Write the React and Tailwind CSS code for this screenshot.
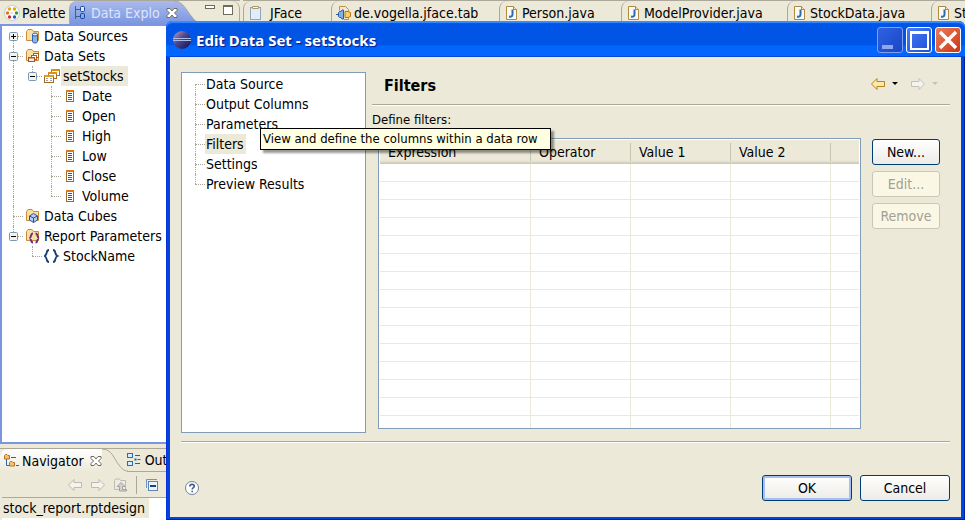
import React from "react";

const UI = "font-['DejaVu_Sans_Condensed','DejaVu_Sans',sans-serif]";

function Svg({ w = 16, h = 16, className = "", children }) {
  return (
    <svg width={w} height={h} viewBox={`0 0 ${w} ${h}`} className={`block shrink-0 ${className}`} aria-hidden="true">
      {children}
    </svg>
  );
}

/* ---------- icons ---------- */

function PaletteIcon() {
  const dots = [
    [5.5, 4, "#f0a020"], [10.5, 4, "#d8b000"], [12.5, 8, "#2f9e3a"],
    [10.5, 12, "#2a56c8"], [5.5, 12, "#d03030"], [3.5, 8, "#e07818"],
  ];
  return (
    <Svg>
      <circle cx="8" cy="8" r="7.5" fill="#fdfdfa" stroke="#b9c3d6" strokeWidth="0.8" />
      {dots.map(([x, y, c]) => (
        <circle key={`${x}-${y}`} cx={x} cy={y} r="1.7" fill={c} />
      ))}
      <circle cx="8" cy="8" r="1.2" fill="#d9e2f2" />
    </Svg>
  );
}

function ExplorerIcon() {
  return (
    <Svg>
      <path d="M1.500 1v13M1.500 4.500h5M1.500 11.500h5" fill="none" stroke="#3f5f8c" />
      <rect x="6.500" y="1.500" width="4" height="5" rx="1" fill="#d8eafc" stroke="#1d3f96" />
      <rect x="6.500" y="8.500" width="4" height="5" rx="1" fill="#6fb2ec" stroke="#1d3f96" />
    </Svg>
  );
}

function CloseMark({ fill = "#fff", stroke = "#6f6b5c" }) {
  return (
    <Svg w={12} h={12}>
      <path d="M1 1.5h3l2 2.5 2-2.5h3v2L8.500 6l2.500 2.500v2H8L6 8l-2 2.500H1v-2L3.500 6 1 3.500z" fill={fill} stroke={stroke} />
    </Svg>
  );
}

function FolderBase() {
  return (
    <path d="M1.500 3.500l1.500-2h4l1.500 2h5v9h-12z" fill="#f9e0a0" stroke="#c98a3a" />
  );
}

function DataSourcesIcon() {
  return (
    <Svg>
      <FolderBase />
      <path d="M7.500 6.500v7c0 2 5 2 5 0v-7z" fill="#86b4ea" stroke="#2c5fae" />
      <ellipse cx="10" cy="6.500" rx="2.500" ry="1.500" fill="#dcebfc" stroke="#2c5fae" />
    </Svg>
  );
}

function DataSetsIcon() {
  return (
    <Svg>
      <FolderBase />
      <rect x="8.500" y="5.500" width="5" height="4" fill="#fff" stroke="#b05a1a" />
      <rect x="6.500" y="7.500" width="5" height="4" fill="#fff" stroke="#b05a1a" />
      <rect x="3.500" y="9.500" width="6" height="4" fill="#eef" stroke="#a8501a" />
      <path d="M3.500 10h6" stroke="#d0521c" />
    </Svg>
  );
}

function DataSetIcon() {
  return (
    <Svg>
      <rect x="7.500" y="1.500" width="8" height="6" fill="#fff" stroke="#b07020" />
      <path d="M7 2h9" stroke="#d89018" strokeWidth="2" />
      <rect x="4.500" y="4.500" width="8" height="6" fill="#fff" stroke="#b07020" />
      <path d="M4 5h9" stroke="#d89018" strokeWidth="2" />
      <rect x="0.500" y="7.500" width="9" height="7" fill="#fff" stroke="#a8691c" />
      <path d="M0 8h10" stroke="#e09a20" strokeWidth="2" />
      <path d="M2 10.500h2M6 10.500h2M2 12.500h2M6 12.500h2" stroke="#8da4c4" />
    </Svg>
  );
}

function ColumnIcon() {
  return (
    <Svg>
      <rect x="3.500" y="2.500" width="7" height="11" fill="#fff" stroke="#9a6a2c" />
      <path d="M3 3h8" stroke="#e07818" strokeWidth="2" />
      <path d="M5 5.500h4M5 7.500h4M5 9.500h4M5 11.500h4" stroke="#d01c34" />
    </Svg>
  );
}

function CubesIcon() {
  return (
    <Svg>
      <FolderBase />
      <path d="M4.500 8l4-2.500 4 2.500v4l-4 2.500-4-2.500z" fill="#b4ccf2" stroke="#2f4f9c" />
      <path d="M4.500 8l4 2 4-2M8.500 10v4.500" fill="none" stroke="#2f4f9c" />
    </Svg>
  );
}

function ParamsIcon() {
  return (
    <Svg>
      <FolderBase />
      <path d="M8 5.500c-3 0-1 4-3.500 4.500C7 10.500 5 14.500 8 14.500M10.500 5.500c3 0 1 4 3.500 4.500C11.500 10.500 13.500 14.500 10.500 14.500" fill="none" stroke="#6a2d86" strokeWidth="1.800" />
    </Svg>
  );
}

function BracesIcon() {
  return (
    <Svg>
      <path d="M5 2C1.500 2 4 6.500 0.500 8 4 9.500 1.500 14 5 14M9 2c3.500 0 1 4.500 4.500 6C10 9.500 12.500 14 9 14" fill="none" stroke="#1c3c74" strokeWidth="1.800" />
    </Svg>
  );
}

function NavigatorIcon() {
  return (
    <Svg>
      <path d="M2.500 6v6.500H6M7 4.500h5" fill="none" stroke="#2c64a8" />
      <path d="M12 12.500h3" stroke="#2c64a8" />
      <path d="M0.500 2.500l1-1h1.500l1 1h1.500v3.500h-5z" fill="#f6c070" stroke="#b8741c" />
      <path d="M5.500 9.500l1-1H8l1 1h1.500V13h-5z" fill="#f6c070" stroke="#b8741c" />
    </Svg>
  );
}

function OutlineIcon() {
  return (
    <Svg>
      <rect x="0.500" y="1.500" width="5" height="4" fill="#d4ecfc" stroke="#1f72b8" />
      <rect x="0.500" y="9.500" width="5" height="4" fill="#d4ecfc" stroke="#1f72b8" />
      <path d="M8 3.500h5M10.500 7.500h3M8 11.500h5" stroke="#1f62ac" />
      <rect x="7.500" y="6.500" width="2" height="2" fill="#1f62ac" />
    </Svg>
  );
}

function ArrowIcon({ back, fill, stroke }) {
  return (
    <Svg>
      <path
        d={back ? "M1.500 8l5.500-5.500v3h7.500v5H7v3z" : "M14.500 8L9 2.500v3H1.500v5H9v3z"}
        fill={fill}
        stroke={stroke}
      />
    </Svg>
  );
}

function UpFolderIcon() {
  return (
    <Svg>
      <path d="M1.500 3.500l1-1.500h4l1 1.500h5v9h-11z" fill="#ecebe4" stroke="#bdbab0" />
      <path d="M8 5.500l4 4H9.500v3h4v1.500H6.500V9.500H4z" fill="#d3d2cc" stroke="#a3a29c" />
    </Svg>
  );
}

function CollapseIcon() {
  return (
    <Svg>
      <path d="M2.500 11V2.500H13" fill="none" stroke="#6e93c6" />
      <rect x="4.500" y="4.500" width="9" height="9" fill="#eaf3fd" stroke="#5c85bd" />
      <path d="M6 9h6" stroke="#1d3f7a" strokeWidth="2" />
    </Svg>
  );
}

function JavaFileIcon() {
  return (
    <Svg>
      <path d="M2.500 1.500h7l3 3v10h-10z" fill="#f7fafe" stroke="#b08a3c" />
      <path d="M9.500 1.500v3h3" fill="#f3dfa8" stroke="#b08a3c" />
      <path d="M8.500 4.500v5c0 2-1.500 2.500-3.500 2" fill="none" stroke="#2f6aa8" strokeWidth="2" />
    </Svg>
  );
}

function ClipboardIcon() {
  return (
    <Svg>
      <rect x="2.500" y="2.500" width="10" height="12" fill="#e3edf9" stroke="#8fa4c0" />
      <path d="M4.500 1.500h6v2h-6z" fill="#fdf7e0" stroke="#a89a70" />
    </Svg>
  );
}

function PluginIcon() {
  return (
    <Svg>
      <path d="M3.500 1.500h6l3 3v2M3.500 1.500v4M8 14.500h4.500v-3" fill="none" stroke="#c0923a" />
      <path d="M9 6.500h3l2.500 1v4l-2.500 1H9z" fill="#fbcf6a" stroke="#b4781c" />
      <path d="M0 9.500h2.500M2.500 7.500l1-1h1.500l1-1.500h1.500v9H6l-1-1.500H3.500l-1-1z" fill="#7fb0e6" stroke="#2c5c9c" />
    </Svg>
  );
}

function EclipseIcon() {
  return (
    <Svg w={20} h={20}>
      <defs>
        <linearGradient id="ball" x1="0" y1="0" x2="1" y2="1">
          <stop offset="0" stopColor="#c99fb4" />
          <stop offset="0.450" stopColor="#4a4690" />
          <stop offset="1" stopColor="#120e50" />
        </linearGradient>
      </defs>
      <circle cx="10" cy="10" r="9" fill="url(#ball)" />
      <path d="M1 8.500h18M1 10.500h18" stroke="#a9bce6" />
    </Svg>
  );
}

function HelpIcon() {
  return (
    <Svg>
      <circle cx="8" cy="8" r="6.500" fill="#fff" stroke="#6c84a4" />
      <path d="M5.800 6.500C5.800 3.600 10.300 3.800 10.300 6.300 10.300 7.700 8.200 7.700 8.200 9.500M8.200 10.700v1.600" fill="none" stroke="#3c5f8c" strokeWidth="1.600" />
    </Svg>
  );
}

function CaretIcon({ color }) {
  return (
    <Svg w={6} h={4}>
      <path d="M0 0h6L3 3z" fill={color} />
    </Svg>
  );
}

/* ---------- tree ---------- */

function Guide({ kind }) {
  const top = kind === "first" || kind === "plus";
  const up = kind !== "blank" && !top;
  const down = top || kind === "line" || kind === "tee" || kind === "minus";
  const across = kind !== "line" && kind !== "blank";
  const box = kind === "plus" || kind === "minus" || kind === "minusEnd";
  return (
    <span className="relative h-5 w-[19px] shrink-0">
      {up && <span className="absolute left-[9px] top-0 h-2.5 border-l border-dotted border-[#a8a496]" />}
      {down && <span className="absolute bottom-0 left-[9px] h-2.5 border-l border-dotted border-[#a8a496]" />}
      {across && <span className="absolute left-[9px] right-0 top-2.5 border-t border-dotted border-[#a8a496]" />}
      {box && (
        <svg width="9" height="9" viewBox="0 0 9 9" className="absolute left-[5px] top-1.5">
          <rect x="0.500" y="0.500" width="8" height="8" rx="1" fill="#f4f2ea" stroke="#7898b5" />
          <path d="M2 4.500h5" stroke="#000" />
          {kind === "plus" && <path d="M4.500 2v5" stroke="#000" />}
        </svg>
      )}
    </span>
  );
}

const TREE = [
  { guides: ["plus"], icon: DataSourcesIcon, label: "Data Sources" },
  { guides: ["minus"], icon: DataSetsIcon, label: "Data Sets" },
  { guides: ["line", "minusEnd"], icon: DataSetIcon, label: "setStocks", selected: true },
  { guides: ["line", "blank", "tee"], icon: ColumnIcon, label: "Date" },
  { guides: ["line", "blank", "tee"], icon: ColumnIcon, label: "Open" },
  { guides: ["line", "blank", "tee"], icon: ColumnIcon, label: "High" },
  { guides: ["line", "blank", "tee"], icon: ColumnIcon, label: "Low" },
  { guides: ["line", "blank", "tee"], icon: ColumnIcon, label: "Close" },
  { guides: ["line", "blank", "end"], icon: ColumnIcon, label: "Volume" },
  { guides: ["tee"], icon: CubesIcon, label: "Data Cubes" },
  { guides: ["minusEnd"], icon: ParamsIcon, label: "Report Parameters" },
  { guides: ["blank", "end"], icon: BracesIcon, label: "StockName" },
];

function ExplorerTree() {
  return (
    <ul className="pl-0.5">
      {TREE.map(({ guides, icon: Icon, label, selected }) => (
        <li key={label} className="flex h-5 items-center">
          {guides.map((kind, i) => (
            <Guide key={i} kind={kind} />
          ))}
          <span className="ml-0.5 mr-px">
            <Icon />
          </span>
          <span className={`h-5 whitespace-nowrap pl-0.5 pr-1 leading-5 ${selected ? "bg-[#ece9d8]" : ""}`}>{label}</span>
        </li>
      ))}
    </ul>
  );
}

/* ---------- workbench ---------- */

function ExplorerView() {
  return (
    <section className="flex grow flex-col">
      <div className="flex h-6 border-t border-[#aca899]">
        <button className="flex w-[69px] shrink-0 items-center gap-0.5 whitespace-nowrap pl-1">
          <PaletteIcon />
          Palette
        </button>
        <div className="flex shrink-0 items-center gap-1 rounded-tl-lg border-l border-[#aca899] bg-linear-to-b from-[#a9baec] to-[#7b96e0] pl-1 text-[#dde5fa]">
          <ExplorerIcon />
          <button className="-ml-1 w-[72px] overflow-hidden whitespace-nowrap pl-px text-left">Data Explo</button>
          <button aria-label="Close view" className="relative z-10">
            <CloseMark />
          </button>
        </div>
        <svg width="30" height="23" viewBox="0 0 30 23" className="-ml-1 block shrink-0" aria-hidden="true">
          <defs>
            <linearGradient id="tabEnd" x1="0" y1="0" x2="0" y2="1">
              <stop offset="0" stopColor="#a9baec" />
              <stop offset="1" stopColor="#7b96e0" />
            </linearGradient>
          </defs>
          <path d="M0 0C9 0 12 9 18 16c3 4 6 6 12 7H0z" fill="url(#tabEnd)" />
          <path d="M0 0C9 0 12 9 18 16c3 4 6 6 12 7" fill="none" stroke="#aca899" />
        </svg>
        <div className="flex grow items-start justify-end gap-2 rounded-tr-lg border-r border-[#aca899] pr-1.5 pt-1">
          <button aria-label="Minimize" className="h-1 w-2.5 shrink-0 border border-[#6f6b5c] bg-white" />
          <button aria-label="Maximize" className="h-2.5 w-2.5 shrink-0 border border-t-2 border-[#6f6b5c] bg-white" />
        </div>
      </div>
      <div className="grow border-2 border-[#7b96e0] bg-white">
        <ExplorerTree />
      </div>
    </section>
  );
}

function NavigatorView() {
  return (
    <section className="mt-1 border-t border-[#aca899]">
      <div className="flex h-[23px]">
        <div className="flex items-center gap-0.5 rounded-tl-lg bg-linear-to-b from-white to-[#ece9d8] pl-1">
          <NavigatorIcon />
          <button className="mr-1">Navigator</button>
          <button aria-label="Close view">
            <CloseMark />
          </button>
        </div>
        <svg width="26" height="23" viewBox="0 0 26 23" className="block shrink-0" aria-hidden="true">
          <path d="M0 0C10 0 12 10 17 16c3 4 5 6 9 6" fill="none" stroke="#aca899" />
        </svg>
        <button className="-ml-px flex grow items-center gap-0.5 whitespace-nowrap border-b border-[#aca899]">
          <OutlineIcon />
          Outline
        </button>
      </div>
      <div className="flex h-[25px] items-center gap-[7px] pl-[67px]">
        <button aria-label="Back" disabled><ArrowIcon back fill="#f4f3ee" stroke="#bdbab0" /></button>
        <button aria-label="Forward" disabled><ArrowIcon fill="#f4f3ee" stroke="#bdbab0" /></button>
        <button aria-label="Up" disabled><UpFolderIcon /></button>
        <span className="h-[18px] border-l border-[#aca899]" />
        <button aria-label="Collapse all"><CollapseIcon /></button>
      </div>
      <div className="ml-0.5 h-[23px] border-t border-[#aca899] bg-white">
        <span className="block h-5 w-fit whitespace-nowrap bg-[#ece9d8] px-px pr-1 leading-5">stock_report.rptdesign</span>
      </div>
    </section>
  );
}

const EDITORS = [
  { label: "JFace", icon: ClipboardIcon, width: "w-[88px]", gap: "gap-1.5" },
  { label: "de.vogella.jface.tab", icon: PluginIcon, width: "w-[168px]", gap: "gap-0.5" },
  { label: "Person.java", icon: JavaFileIcon, width: "w-[122px]", gap: "gap-0.5" },
  { label: "ModelProvider.java", icon: JavaFileIcon, width: "w-[166px]", gap: "gap-0.5" },
  { label: "StockData.java", icon: JavaFileIcon, width: "w-[144px]", gap: "gap-0.5" },
  { label: "Stock.java", icon: JavaFileIcon, width: "w-[120px]", gap: "gap-0.5" },
];

function EditorTabs() {
  return (
    <nav className="flex h-6 grow overflow-hidden border-t border-[#aca899]">
      {EDITORS.map(({ label, icon: Icon, width, gap }) => (
        <button key={label} className={`flex shrink-0 items-center whitespace-nowrap rounded-tl-lg border-l border-[#aca899] pl-1 ${gap} ${width}`}>
          <Icon />
          {label}
        </button>
      ))}
    </nav>
  );
}

/* ---------- dialog ---------- */

const PAGES = ["Data Source", "Output Columns", "Parameters", "Filters", "Settings", "Preview Results"];

function PageTree() {
  return (
    <ul className="w-[185px] shrink-0 border border-[#7f9db9] bg-white pl-1 pt-px">
      {PAGES.map((page, i) => (
        <li key={page} className="flex h-5 items-center">
          <Guide kind={i === 0 ? "first" : i === PAGES.length - 1 ? "end" : "tee"} />
          <button className={`h-5 whitespace-nowrap pl-px pr-0.5 leading-5 ${page === "Filters" ? "bg-[#ece9d8]" : ""}`}>{page}</button>
        </li>
      ))}
    </ul>
  );
}

const COLUMNS = [
  { label: "Expression", width: "w-[151px]" },
  { label: "Operator", width: "w-[100px]" },
  { label: "Value 1", width: "w-[100px]" },
  { label: "Value 2", width: "w-[100px]" },
  { label: "", width: "" },
];

function FilterTable() {
  return (
    <div className="grow overflow-hidden border border-[#7f9db9] bg-white p-px pb-0">
      <table className="w-full table-fixed border-separate border-spacing-0">
        <thead>
          <tr className="h-6 bg-linear-to-b from-[#ece9d8] from-85% to-[#c9c5b4]">
            {COLUMNS.map(({ label, width }, i) => (
              <th key={i} className={`p-0 text-left font-normal ${width}`}>
                <div className={`h-[18px] pl-2 leading-[18px] ${label ? "border-r border-[#c7c5b2]" : ""}`}>{label}</div>
              </th>
            ))}
          </tr>
        </thead>
        <tbody>
          {Array.from({ length: 15 }, (_, r) => (
            <tr key={r} className={r === 14 ? "h-3" : "h-[18px]"}>
              {COLUMNS.map((_, c) => (
                <td key={c} className={`border-[#ece9d8] p-0 ${c < 4 ? "border-r" : ""} ${r < 14 ? "border-b" : ""}`} />
              ))}
            </tr>
          ))}
        </tbody>
      </table>
    </div>
  );
}

function DialogButton({ children, disabled, primary, className }) {
  const look = disabled
    ? "border-[#c9c7ba] bg-[#faf8e4] text-[#a1a092]"
    : primary
      ? "border-[#003c74] bg-linear-to-b from-white to-[#ecebe6] shadow-[inset_0_0_0_2px_#a5bff0]"
      : "border-[#003c74] bg-linear-to-b from-white to-[#ecebe6]";
  return (
    <button disabled={disabled} className={`rounded-[3px] border text-center ${look} ${className}`}>
      {children}
    </button>
  );
}

function Rule() {
  return <div className="h-0.5 border-b border-t border-b-white border-t-[#aca899]" />;
}

function TitleBar() {
  return (
    <header className="flex h-9 shrink-0 items-center gap-1 rounded-t-md bg-linear-to-b from-[#0054e6] from-65% to-[#0066ff] to-70% pl-1.5 pr-1 pt-0.5 shadow-[inset_0_2px_1px_#3a8cff,inset_0_-1px_0_#0046dc]">
      <EclipseIcon />
      <h1 className="grow font-['Noto_Sans',sans-serif] text-[15px] font-bold text-white [text-shadow:1px_1px_1px_#0a1883]">
        Edit Data Set - setStocks
      </h1>
      <div className="flex gap-[3px]">
        <button aria-label="Minimize" className="flex h-[26px] w-[26px] items-end rounded-[3px] border border-[#7f9ff0] bg-linear-to-br from-[#2f62e0] to-[#1846c8] pb-[3px] pl-1">
          <span className="h-1 w-[11px] bg-[#8ea8ec]" />
        </button>
        <button aria-label="Maximize" className="flex h-[26px] w-[26px] items-center justify-center rounded-[3px] border border-white bg-linear-to-br from-[#4a7cf4] to-[#1c4fd8]">
          <span className="h-[19px] w-[19px] border-2 border-t-3 border-white" />
        </button>
        <button aria-label="Close" className="flex h-[26px] w-[26px] items-center justify-center rounded-[3px] border border-white bg-linear-to-br from-[#ec7a58] to-[#cc3410]">
          <Svg w={20} h={20}>
            <path d="M2 2l16 16M18 2L2 18" stroke="#fff" strokeWidth="3.500" />
          </Svg>
        </button>
      </div>
    </header>
  );
}

function EditDialog() {
  return (
    <div role="dialog" aria-label="Edit Data Set - setStocks" className="absolute bottom-0 left-[166px] right-0 top-[21px] flex flex-col rounded-t-lg bg-[#0046dc] shadow-[inset_1px_0_0_#0831d9,inset_-1px_-1px_0_#001ea0]">
      <TitleBar />
      <div className="mx-1 mb-[3px] flex grow flex-col bg-[#ece9d8] px-[11px] pt-[15px]">
        <div className="flex">
          <PageTree />
          <section className="flex min-w-0 grow flex-col pl-1.5">
            <div className="flex h-8 items-start justify-between pl-3 pr-3 pt-1">
              <h2 className="text-base font-bold leading-5">Filters</h2>
              <div className="flex items-center gap-1.5">
                <button aria-label="Back"><ArrowIcon back fill="#fdeaa8" stroke="#b8821c" /></button>
                <button aria-label="Back history"><CaretIcon color="#000" /></button>
                <button aria-label="Forward" disabled className="ml-1.5"><ArrowIcon fill="#f4f3ee" stroke="#c4c2b8" /></button>
                <button aria-label="Forward history" disabled><CaretIcon color="#c4c2b8" /></button>
              </div>
            </div>
            <Rule />
            <p className="mt-1 text-[13px] leading-5">Define filters:</p>
            <div className="mb-1 ml-1.5 mt-2 flex pr-2.5">
              <FilterTable />
              <div className="ml-[11px] flex w-[68px] shrink-0 flex-col gap-1.5 pt-px">
                <DialogButton className="h-[26px]">New...</DialogButton>
                <DialogButton className="h-[26px]" disabled>Edit...</DialogButton>
                <DialogButton className="h-[26px]" disabled>Remove</DialogButton>
              </div>
            </div>
          </section>
        </div>
        <div className="mt-2">
          <Rule />
        </div>
        <footer className="flex items-center gap-2 pb-3.5 pt-8">
          <button aria-label="Help" className="mr-auto ml-[3px]"><HelpIcon /></button>
          <DialogButton primary className="h-[26px] w-[90px]">OK</DialogButton>
          <DialogButton className="h-[26px] w-[90px]">Cancel</DialogButton>
        </footer>
      </div>
      <div role="tooltip" className="absolute left-[94px] top-[107px] h-[22px] whitespace-nowrap border border-black bg-[#ffffe1] pl-0.5 pr-3 text-[13px] leading-5 shadow-[3px_3px_2px_rgba(0,0,0,0.4)]">
        View and define the columns within a data row
      </div>
    </div>
  );
}

export default function App() {
  return (
    <main className={`relative flex h-screen overflow-hidden bg-[#ece9d8] text-[14px] leading-5 text-black ${UI}`}>
      <div className="flex w-[240px] shrink-0 flex-col">
        <ExplorerView />
        <NavigatorView />
      </div>
      <div className="flex min-w-0 grow pl-[3px]">
        <EditorTabs />
      </div>
      <EditDialog />
    </main>
  );
}
